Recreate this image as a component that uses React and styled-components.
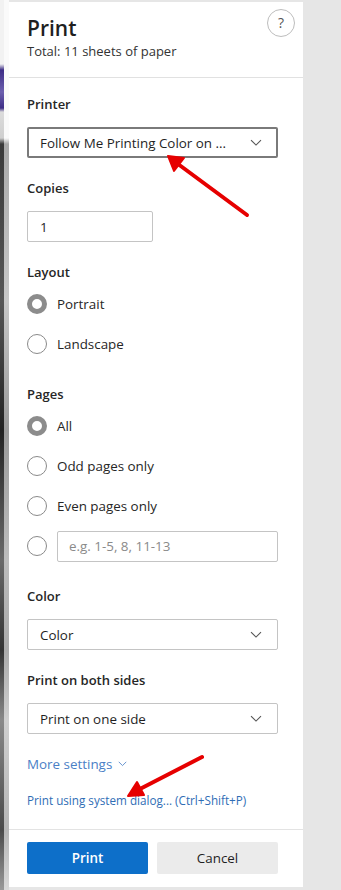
import React from 'react'
import styled, { createGlobalStyle } from 'styled-components'

const Global = createGlobalStyle`
  html, body { margin: 0; padding: 0; }
  body {
    background: #e6e6e6;
    font-family: "Open Sans", "Noto Sans", "Liberation Sans", sans-serif;
    color: #242424;
  }
`

const Screen = styled.div`
  position: relative;
  display: flex;
  width: 341px;
  height: 890px;
  overflow: hidden;
  background: #e6e6e6;
`

// a sliver of the page behind the print panel
const PageEdge = styled.div`
  width: 9px;
  flex: none;
  display: flex;
`

const PageEdgeInner = styled.div`
  width: ${p => p.$w}px;
  background: ${p => p.$bg};
`

const Panel = styled.div`
  width: 294px;
  flex: none;
  display: flex;
  flex-direction: column;
  background: #fff;
  border-top: 2px solid #e6e6e6;
  border-bottom: 3px solid #e6e6e6;
  box-sizing: border-box;
`

const Header = styled.div`
  height: 76px;
  box-sizing: border-box;
  padding: 7px 8px 0 18px;
  display: flex;
  justify-content: space-between;
  align-items: flex-start;
  border-bottom: 1px solid #e1e1e1;
`

const HeaderText = styled.div`
  padding-top: 5px;
`

const Title = styled.h1`
  margin: 0;
  font-size: 21px;
  line-height: 28px;
  font-weight: 600;
  color: #1f1f1f;
`

const Subtitle = styled.div`
  font-size: 13px;
  line-height: 19px;
  color: #333;
`

const HelpButton = styled.button`
  width: 28px;
  height: 28px;
  border-radius: 50%;
  border: 1px solid #bdbdbd;
  background: #fff;
  color: #555;
  font-family: inherit;
  font-size: 14px;
  padding: 0;
  line-height: 26px;
`

const Body = styled.div`
  flex: 1;
  padding: 16px 25px 0 18px;
  display: flex;
  flex-direction: column;
`

const Section = styled.div`
  display: flex;
  flex-direction: column;
  margin-bottom: 20px;
`

const Label = styled.div`
  font-size: 13px;
  line-height: 20px;
  font-weight: 600;
  color: #262626;
  margin-bottom: ${p => (p.$tight ? 2 : 13)}px;
`

const Select = styled.div`
  height: 31px;
  box-sizing: border-box;
  border: ${p => (p.$focus ? '2px solid #7a7a7a' : '1px solid #c4c4c4')};
  border-radius: 2px;
  display: flex;
  align-items: center;
  justify-content: space-between;
  padding: 0 ${p => (p.$focus ? 14 : 15)}px 0 ${p => (p.$focus ? 11 : 12)}px;
  font-size: 13.4px;
  color: #1f1f1f;
`

const TextBox = styled.div`
  height: 31px;
  width: ${p => p.$width || '100%'};
  box-sizing: border-box;
  border: 1px solid #c4c4c4;
  border-radius: 2px;
  display: flex;
  align-items: center;
  padding-left: ${p => p.$pad || 12}px;
  font-size: 13.4px;
  color: ${p => (p.$placeholder ? '#8a8a8a' : '#1f1f1f')};
`

const RadioRow = styled.div`
  height: 40px;
  display: flex;
  align-items: center;
  gap: 10px;
  font-size: 13.4px;
  color: #262626;
`

const Radio = styled.span`
  width: 20px;
  height: 20px;
  flex: none;
  box-sizing: border-box;
  border-radius: 50%;
  background: #fff;
  border: ${p => (p.$checked ? '5px solid #8c8c8c' : '1px solid #8a8a8a')};
`

const Link = styled.div`
  color: ${p => (p.$strong ? '#4a80c6' : '#2f6db5')};
  font-size: ${p => (p.$small ? 11.7 : 13.4)}px;
  line-height: 20px;
  display: flex;
  align-items: center;
  gap: 6px;
  margin-bottom: ${p => p.$mb || 0}px;
`

const Footer = styled.div`
  border-top: 1px solid #e3e3e3;
  padding: 12px 25px 13px 18px;
  display: flex;
  gap: 9px;
`

const Button = styled.button`
  flex: 1;
  height: 32px;
  border: none;
  border-radius: 2px;
  font-family: inherit;
  font-size: 13.4px;
  font-weight: ${p => (p.$primary ? 600 : 400)};
  background: ${p => (p.$primary ? '#0d6fc9' : '#ebebeb')};
  color: ${p => (p.$primary ? '#fff' : '#1f1f1f')};
`

const Fill = styled.div`
  flex: 1;
  background: #e6e6e6;
`

const Annotations = styled.svg`
  position: absolute;
  left: 0;
  top: 0;
  pointer-events: none;
`

const Chevron = ({ size = 12, color = '#555' }) => (
  <svg width={size} height={size * 0.6} viewBox="0 0 12 7" fill="none">
    <path d="M1 1l5 5 5-5" stroke={color} strokeWidth="1.1" />
  </svg>
)

const Dropdown = ({ value, focus }) => (
  <Select $focus={focus}>
    <span>{value}</span>
    <Chevron />
  </Select>
)

export default function App() {
  return (
    <Screen>
      <Global />
      <PageEdge>
        <PageEdgeInner
          $w={4}
          $bg="linear-gradient(180deg, #f2f2f2 0, #f2f2f2 64px, #3d2d86 70px, #6c5fae 92px, #3d2d86 108px, #dcdcdc 112px, #cfcfcf 138px, #3a3a3a 144px, #575757 300px, #222 430px, #6a6a6a 560px, #333 650px, #8a8a8a 720px, #4a4a4a 830px, #9a9a9a 890px)"
        />
        <PageEdgeInner
          $w={5}
          $bg="linear-gradient(180deg, #fafafa 0, #fafafa 138px, #a9a9a9 144px, #c8c8c8 300px, #9a9a9a 430px, #bdbdbd 560px, #aaa 650px, #d0d0d0 720px, #b5b5b5 830px, #dadada 890px)"
        />
      </PageEdge>
      <Panel>
        <Header>
          <HeaderText>
            <Title>Print</Title>
            <Subtitle>Total: 11 sheets of paper</Subtitle>
          </HeaderText>
          <HelpButton>?</HelpButton>
        </Header>

        <Body>
          <Section>
            <Label>Printer</Label>
            <Dropdown focus value="Follow Me Printing Color on ..." />
          </Section>

          <Section>
            <Label>Copies</Label>
            <TextBox $width="126px">1</TextBox>
          </Section>

          <Section>
            <Label $tight>Layout</Label>
            <RadioRow><Radio $checked />Portrait</RadioRow>
            <RadioRow><Radio />Landscape</RadioRow>
          </Section>

          <Section>
            <Label $tight>Pages</Label>
            <RadioRow><Radio $checked />All</RadioRow>
            <RadioRow><Radio />Odd pages only</RadioRow>
            <RadioRow><Radio />Even pages only</RadioRow>
            <RadioRow>
              <Radio />
              <TextBox $placeholder $pad={11}>e.g. 1-5, 8, 11-13</TextBox>
            </RadioRow>
          </Section>

          <Section>
            <Label>Color</Label>
            <Dropdown value="Color" />
          </Section>

          <Section>
            <Label>Print on both sides</Label>
            <Dropdown value="Print on one side" />
          </Section>

          <Link $strong $mb={16}>
            More settings <Chevron size={9} color="#4a80c6" />
          </Link>
          <Link $small>Print using system dialog... (Ctrl+Shift+P)</Link>
        </Body>

        <Footer>
          <Button $primary>Print</Button>
          <Button>Cancel</Button>
        </Footer>
      </Panel>
      <Fill />

      <Annotations width="341" height="890">
        <g stroke="#e60000" strokeWidth="4" strokeLinecap="round" fill="#e60000">
          <line x1="247" y1="215" x2="178" y2="164" />
          <polygon points="168,156 184,158 174,171" strokeWidth="2" strokeLinejoin="round" />
          <line x1="202" y1="757" x2="138" y2="790" />
          <polygon points="128,796 137,782 144,795" strokeWidth="2" strokeLinejoin="round" />
        </g>
      </Annotations>
    </Screen>
  )
}
